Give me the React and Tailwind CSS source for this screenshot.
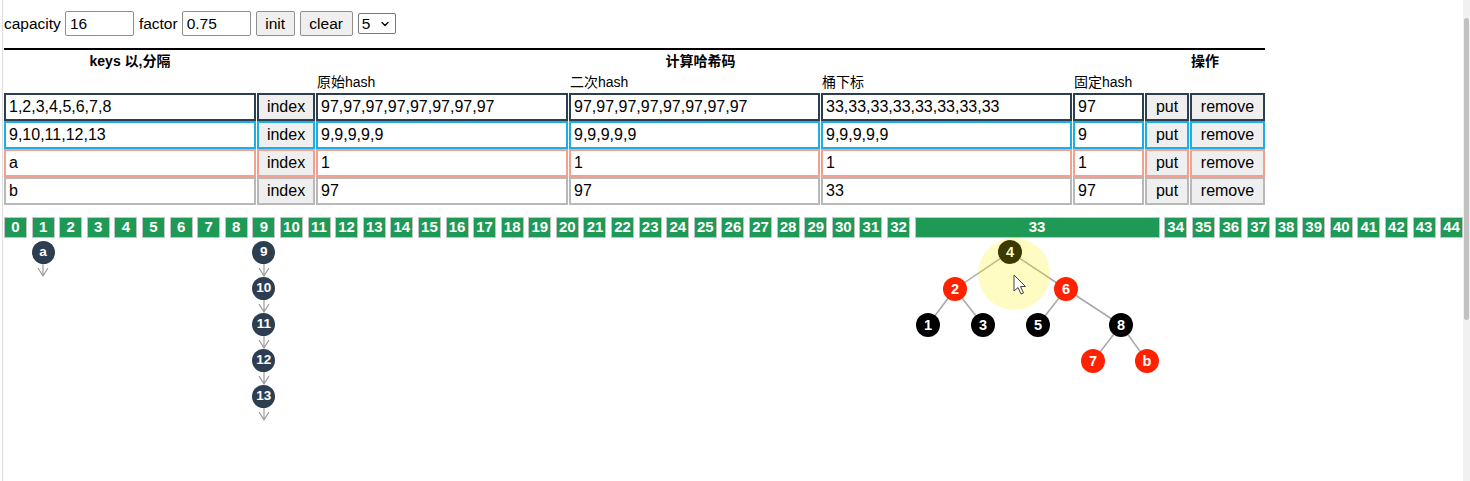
import React from 'react';
import { ChevronDown } from 'lucide-react';

const rows = [
  { keys: '1,2,3,4,5,6,7,8', raw: '97,97,97,97,97,97,97,97', second: '97,97,97,97,97,97,97,97', slot: '33,33,33,33,33,33,33,33', fixed: '97', border: 'border-[#2c3e50]' },
  { keys: '9,10,11,12,13', raw: '9,9,9,9,9', second: '9,9,9,9,9', slot: '9,9,9,9,9', fixed: '9', border: 'border-[#1eaee6]' },
  { keys: 'a', raw: '1', second: '1', slot: '1', fixed: '1', border: 'border-[#f2a090]' },
  { keys: 'b', raw: '97', second: '97', slot: '33', fixed: '97', border: 'border-[#b8b8b8]' },
];

const buckets = Array.from({ length: 45 }, (_, i) => i);

// linked lists hanging under a bucket
const chains = { 1: ['a'], 9: ['9', '10', '11', '12', '13'] };

// red-black tree in bucket 33
const treeNodes = [
  { k: '4', x: 95, y: 14 },
  { k: '2', x: 40, y: 51, red: true },
  { k: '6', x: 151, y: 51, red: true },
  { k: '1', x: 13, y: 87 },
  { k: '3', x: 68, y: 87 },
  { k: '5', x: 123, y: 87 },
  { k: '8', x: 206, y: 87 },
  { k: '7', x: 178, y: 123, red: true },
  { k: 'b', x: 232, y: 123, red: true },
];
const treeEdges = [['4', '2'], ['4', '6'], ['2', '1'], ['2', '3'], ['6', '5'], ['6', '8'], ['8', '7'], ['8', 'b']];

const cols = 'grid grid-cols-[252px_58px_252px_251px_251px_71px_44px_75px] gap-x-[1px]';

const ChainArrow = () => (
  <svg width="12" height="13" viewBox="0 0 12 13" className="block">
    <path d="M6 0V12M1 4L6 12L11 4" fill="none" stroke="#9c9c9c" strokeWidth="1.2" />
  </svg>
);

const Tree = () => {
  const pos = Object.fromEntries(treeNodes.map(n => [n.k, n]));
  return (
    <svg width="245" height="140" viewBox="0 0 245 140" className="block">
      {treeEdges.map(([a, b]) => (
        <line key={a + b} x1={pos[a].x} y1={pos[a].y} x2={pos[b].x} y2={pos[b].y} stroke="#a8a8a8" strokeWidth="1.5" />
      ))}
      {treeNodes.map(n => (
        <g key={n.k}>
          <circle cx={n.x} cy={n.y} r="12" fill={n.red ? '#ff2200' : '#000'} />
          <text x={n.x} y={n.y + 5} textAnchor="middle" fontSize="14.5" fontWeight="700" fill="#fff" fontFamily="Liberation Sans, sans-serif">{n.k}</text>
        </g>
      ))}
      {/* click highlight + cursor */}
      <circle cx="99" cy="36" r="36" fill="#fcf300" fillOpacity="0.24" />
      <path d="M99 37L99 53L103 49.5L106 56L108.5 55L105.5 48.5L110.5 48.5Z" fill="#fff" stroke="#444" strokeWidth="1" />
    </svg>
  );
};

const App = () => {
  return (
    <div className="flex h-[481px] overflow-hidden bg-white text-black [font-family:'Liberation_Sans','Noto_Sans_CJK_SC',sans-serif]">
      <div className="ml-[2px] flex-1 border-l border-[#dedede] pl-[1px] pt-[11px]">
        {/* controls */}
        <div className="flex h-[25px] items-center text-[15.5px]">
          <span>capacity</span>
          <input defaultValue="16" className="ml-[4px] h-[25px] w-[69px] rounded-[2px] border border-[#8f8f8f] px-[4px]" />
          <span className="ml-[5px]">factor</span>
          <input defaultValue="0.75" className="ml-[4px] h-[25px] w-[69px] rounded-[2px] border border-[#8f8f8f] px-[4px]" />
          <button className="ml-[5px] h-[25px] w-[39px] rounded-[2px] border border-[#8f8f8f] bg-[#efefef]">init</button>
          <button className="ml-[5px] h-[25px] w-[53px] rounded-[2px] border border-[#8f8f8f] bg-[#efefef]">clear</button>
          <div className="ml-[5px] flex h-[21px] w-[38px] items-center justify-between rounded-[2px] border border-[#767676] pl-[3px] pr-[4px]">
            <span>5</span>
            <ChevronDown size={12} strokeWidth={2.5} />
          </div>
        </div>

        {/* key table */}
        <div className="mt-[12px] w-[1261px] border-t-2 border-black">
          <div className={`${cols} h-[22px] items-center text-[14px] font-bold`}>
            <div className="text-center">keys 以,分隔</div>
            <div className="col-span-5 text-center">计算哈希码</div>
            <div className="col-span-2 text-center">操作</div>
          </div>
          <div className={`${cols} h-[20px] items-center text-[14px]`}>
            <div />
            <div />
            <div className="pl-[1px]">原始hash</div>
            <div className="pl-[1px]">二次hash</div>
            <div className="pl-[1px]">桶下标</div>
            <div className="pl-[1px]">固定hash</div>
            <div />
            <div />
          </div>
          <div className="mt-[1px] flex flex-col gap-y-[1px] text-[16px]">
            {rows.map(r => (
              <div key={r.keys} className={`${cols} h-[27px]`}>
                <input defaultValue={r.keys} className={`h-full border-2 ${r.border} bg-white px-[3px]`} />
                <button className={`h-full border-2 ${r.border} bg-[#efefef]`}>index</button>
                <input defaultValue={r.raw} className={`h-full border-2 ${r.border} bg-white px-[3px]`} />
                <input defaultValue={r.second} className={`h-full border-2 ${r.border} bg-white px-[3px]`} />
                <input defaultValue={r.slot} className={`h-full border-2 ${r.border} bg-white px-[3px]`} />
                <input defaultValue={r.fixed} className={`h-full border-2 ${r.border} bg-white px-[3px]`} />
                <button className={`h-full border-2 ${r.border} bg-[#efefef]`}>put</button>
                <button className={`h-full border-2 ${r.border} bg-[#efefef]`}>remove</button>
              </div>
            ))}
          </div>
        </div>

        {/* buckets */}
        <div className="mt-[13px] flex shrink-0 gap-x-[4.6px]">
          {buckets.map(i => (
            <div key={i} className={`flex shrink-0 flex-col items-center ${i === 33 ? 'w-[245px]' : 'w-[23px]'}`}>
              <div className="flex h-[21px] w-full items-center justify-center border border-[#c4c4c4] bg-[#1f9a56] text-[15px] font-bold text-white">
                {i}
              </div>
              {chains[i] && (
                <div className="mt-[3px] flex flex-col items-center">
                  {chains[i].map(k => (
                    <div key={k} className="flex flex-col items-center">
                      <div className="flex h-[23px] w-[23px] items-center justify-center rounded-full bg-[#2c3e50] text-[13.5px] font-bold text-white">{k}</div>
                      <ChainArrow />
                    </div>
                  ))}
                </div>
              )}
              {i === 33 && <Tree />}
            </div>
          ))}
        </div>
      </div>

      {/* scrollbar */}
      <div className="w-[7px] shrink-0 bg-[#f1f1f1]">
        <div className="mx-[1px] mt-[18px] h-[302px] rounded-full bg-[#c1c1c1]" />
      </div>
    </div>
  );
};

export default App;
